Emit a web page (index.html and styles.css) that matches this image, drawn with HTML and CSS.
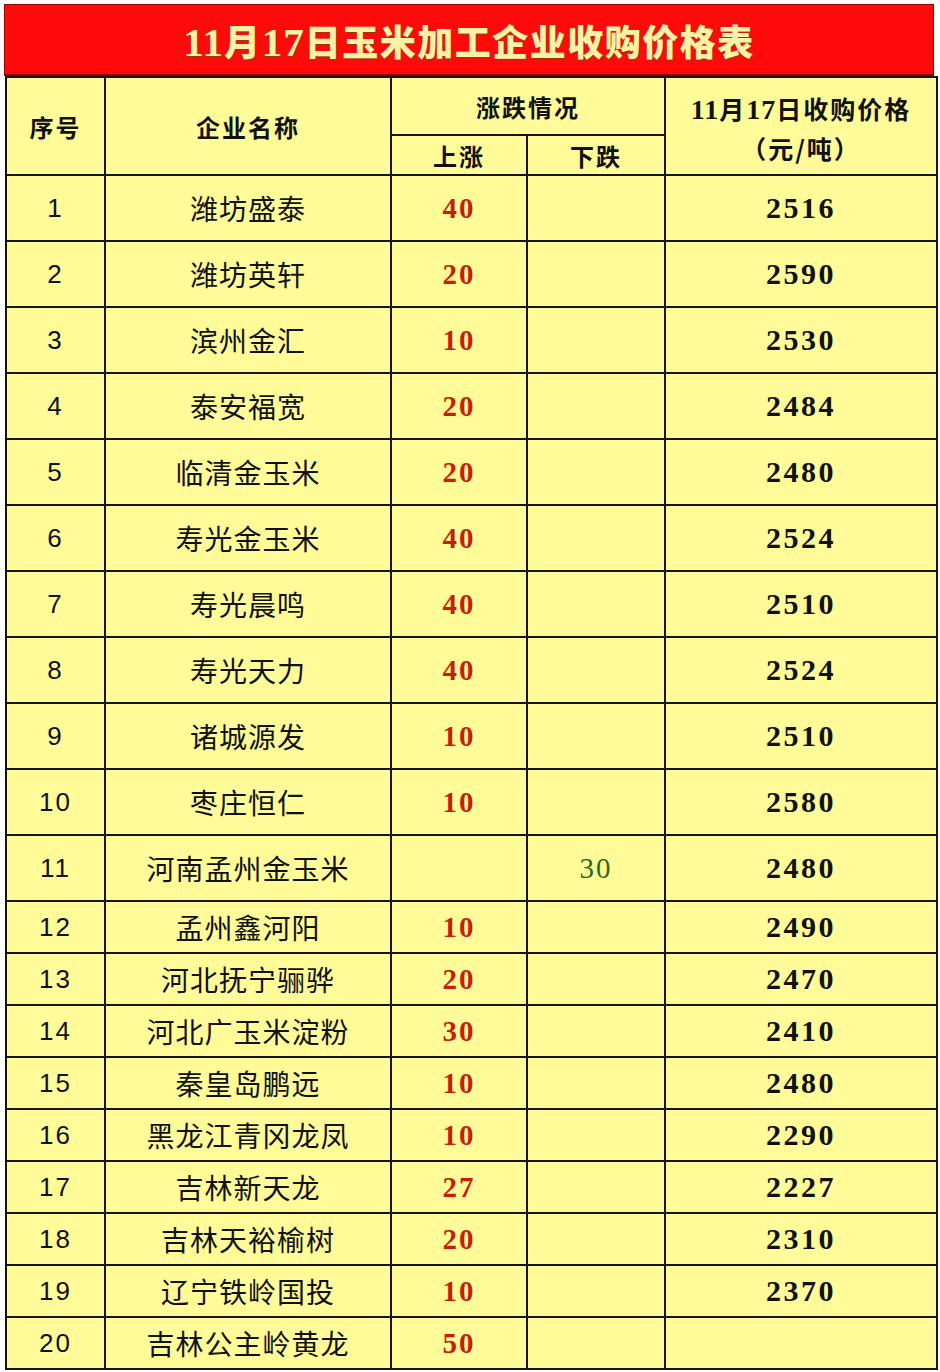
FILE: index.html
```html
<!DOCTYPE html>
<html lang="zh-CN">
<head>
<meta charset="utf-8">
<title>11月17日玉米加工企业收购价格表</title>
<link rel="stylesheet" href="styles.css">
</head>
<body>
<div class="sheet">
  <div class="title"><span class="num">11</span>月<span class="num">17</span>日玉米加工企业收购价格表</div>
  <table class="grid">
    <colgroup>
      <col class="c-idx"><col class="c-name"><col class="c-up"><col class="c-down"><col class="c-price">
    </colgroup>
    <thead>
      <tr class="h1">
        <th rowspan="2">序号</th>
        <th rowspan="2">企业名称</th>
        <th colspan="2">涨跌情况</th>
        <th rowspan="2" class="ph"><span class="num">11</span>月<span class="num">17</span>日收购价格<br>（元/吨）</th>
      </tr>
      <tr class="h2">
        <th>上涨</th>
        <th>下跌</th>
      </tr>
    </thead>
    <tbody>
      <tr class="tall"><td class="idx">1</td><td class="name">潍坊盛泰</td><td class="up">40</td><td class="down"></td><td class="price">2516</td></tr>
      <tr class="tall"><td class="idx">2</td><td class="name">潍坊英轩</td><td class="up">20</td><td class="down"></td><td class="price">2590</td></tr>
      <tr class="tall"><td class="idx">3</td><td class="name">滨州金汇</td><td class="up">10</td><td class="down"></td><td class="price">2530</td></tr>
      <tr class="tall"><td class="idx">4</td><td class="name">泰安福宽</td><td class="up">20</td><td class="down"></td><td class="price">2484</td></tr>
      <tr class="tall"><td class="idx">5</td><td class="name">临清金玉米</td><td class="up">20</td><td class="down"></td><td class="price">2480</td></tr>
      <tr class="tall"><td class="idx">6</td><td class="name">寿光金玉米</td><td class="up">40</td><td class="down"></td><td class="price">2524</td></tr>
      <tr class="tall"><td class="idx">7</td><td class="name">寿光晨鸣</td><td class="up">40</td><td class="down"></td><td class="price">2510</td></tr>
      <tr class="tall"><td class="idx">8</td><td class="name">寿光天力</td><td class="up">40</td><td class="down"></td><td class="price">2524</td></tr>
      <tr class="tall"><td class="idx">9</td><td class="name">诸城源发</td><td class="up">10</td><td class="down"></td><td class="price">2510</td></tr>
      <tr class="tall"><td class="idx">10</td><td class="name">枣庄恒仁</td><td class="up">10</td><td class="down"></td><td class="price">2580</td></tr>
      <tr class="tall"><td class="idx">11</td><td class="name">河南孟州金玉米</td><td class="up"></td><td class="down">30</td><td class="price">2480</td></tr>
      <tr class="short"><td class="idx">12</td><td class="name">孟州鑫河阳</td><td class="up">10</td><td class="down"></td><td class="price">2490</td></tr>
      <tr class="short"><td class="idx">13</td><td class="name">河北抚宁骊骅</td><td class="up">20</td><td class="down"></td><td class="price">2470</td></tr>
      <tr class="short"><td class="idx">14</td><td class="name">河北广玉米淀粉</td><td class="up">30</td><td class="down"></td><td class="price">2410</td></tr>
      <tr class="short"><td class="idx">15</td><td class="name">秦皇岛鹏远</td><td class="up">10</td><td class="down"></td><td class="price">2480</td></tr>
      <tr class="short"><td class="idx">16</td><td class="name">黑龙江青冈龙凤</td><td class="up">10</td><td class="down"></td><td class="price">2290</td></tr>
      <tr class="short"><td class="idx">17</td><td class="name">吉林新天龙</td><td class="up">27</td><td class="down"></td><td class="price">2227</td></tr>
      <tr class="short"><td class="idx">18</td><td class="name">吉林天裕榆树</td><td class="up">20</td><td class="down"></td><td class="price">2310</td></tr>
      <tr class="short"><td class="idx">19</td><td class="name">辽宁铁岭国投</td><td class="up">10</td><td class="down"></td><td class="price">2370</td></tr>
      <tr class="short"><td class="idx">20</td><td class="name">吉林公主岭黄龙</td><td class="up">50</td><td class="down"></td><td class="price"></td></tr>
    </tbody>
  </table>
</div>
</body>
</html>
```

FILE: styles.css
```css
html, body {
  margin: 0;
  padding: 0;
  background: #ffffff;
}

.sheet {
  width: 940px;
  padding: 4px 0 0 4px;
  box-sizing: border-box;
}

.title {
  width: 930px;
  height: 72px;
  box-sizing: border-box;
  background: #ff0a0a;
  border: 1px solid #a00000;
  border-bottom: 2px solid #8a0000;
  color: #fff1a8;
  font-family: "Noto Sans CJK SC", sans-serif;
  font-weight: 900;
  font-size: 36px;
  letter-spacing: 1.5px;
  text-align: center;
  line-height: 70px;
  text-shadow: 1px 1px 1px #9a3a00;
}

.title .num {
  font-family: "Liberation Serif", serif;
  font-weight: 700;
  font-size: 41px;
  letter-spacing: 1px;
}

.grid {
  width: 931px;
  margin-left: 1px;
  border-collapse: collapse;
  table-layout: fixed;
  background: #fffb98;
  color: #111111;
}

.c-idx { width: 99px; }
.c-name { width: 286px; }
.c-up { width: 136px; }
.c-down { width: 138px; }
.c-price { width: 272px; }

.grid th,
.grid td {
  border: 2px solid #151515;
  padding: 0;
  text-align: center;
  vertical-align: middle;
}

.grid th {
  font-family: "Noto Sans CJK SC", sans-serif;
  font-weight: 700;
  font-size: 24px;
  letter-spacing: 2px;
}

.grid .h1 th { height: 56px; }
.grid .h2 th { height: 38px; }

.grid th.ph {
  font-size: 25px;
  line-height: 38px;
  padding-top: 4px;
}

.grid th .num {
  font-family: "Liberation Serif", serif;
  font-weight: 700;
  font-size: 28px;
  letter-spacing: 1px;
}

.grid .tall td { height: 64px; }
.grid .short td { height: 50px; }

.idx {
  font-family: "Liberation Sans", sans-serif;
  font-size: 26px;
  letter-spacing: 2px;
}

.name {
  font-family: "Noto Sans CJK SC", sans-serif;
  font-weight: 400;
  font-size: 28px;
  letter-spacing: 1px;
}

.up {
  font-family: "Liberation Serif", serif;
  font-weight: 700;
  font-size: 29px;
  letter-spacing: 2px;
  color: #c81e08;
}

.down {
  font-family: "Liberation Serif", serif;
  font-weight: 400;
  font-size: 29px;
  letter-spacing: 2px;
  color: #2d6a12;
}

.price {
  font-family: "Liberation Serif", serif;
  font-weight: 700;
  font-size: 30px;
  letter-spacing: 2.5px;
}
```
